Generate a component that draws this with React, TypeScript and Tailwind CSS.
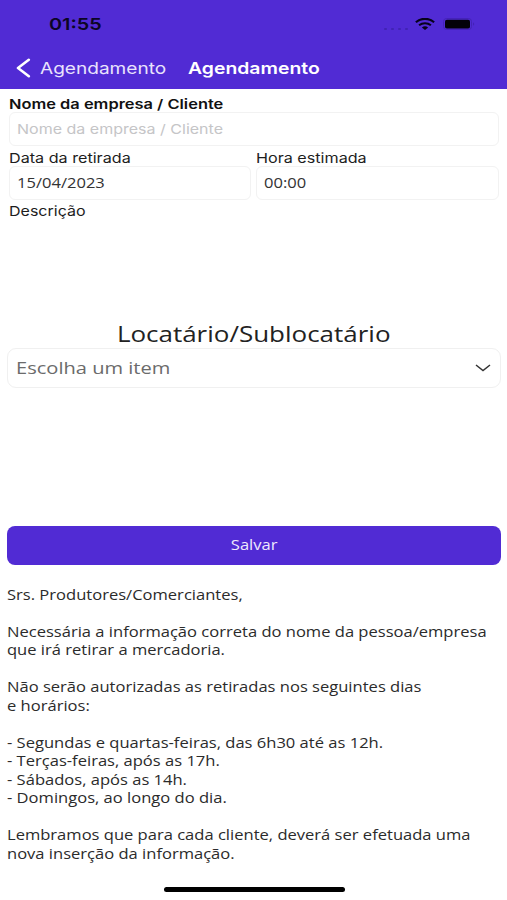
import type { ReactNode } from "react";

const INTER = "font-['Inter','Liberation_Sans',sans-serif]";

function Wide({ children, className = "" }: { children: ReactNode; className?: string }) {
  return (
    <span className={`inline-block whitespace-pre ${className || "origin-left scale-x-[1.217]"}`}>
      {children}
    </span>
  );
}

const notice = [
  "Srs. Produtores/Comerciantes,",
  "",
  "Necessária a informação correta do nome da pessoa/empresa",
  "que irá retirar a mercadoria.",
  "",
  "Não serão autorizadas as retiradas nos seguintes dias",
  "e horários:",
  "",
  "- Segundas e quartas-feiras, das 6h30 até as 12h.",
  "- Terças-feiras, após as 17h.",
  "- Sábados, após as 14h.",
  "- Domingos, ao longo do dia.",
  "",
  "Lembramos que para cada cliente, deverá ser efetuada uma",
  "nova inserção da informação.",
];

function StatusBar() {
  return (
    <div className={`flex h-[48px] items-center justify-between pl-[49px] pr-[32px] ${INTER}`}>
      <div className="text-[16.5px] font-semibold leading-[20px] text-[#0b0524]">
        <Wide className="origin-left scale-x-[1.2]">01:55</Wide>
      </div>
      <div className="flex items-center">
        <div className="mt-[9px] flex gap-[4px]">
          <i className="h-[2px] w-[3px] rounded-full bg-[#4123b4]" />
          <i className="h-[2px] w-[3px] rounded-full bg-[#4123b4]" />
          <i className="h-[2px] w-[3px] rounded-full bg-[#4123b4]" />
          <i className="h-[2px] w-[3px] rounded-full bg-[#4123b4]" />
        </div>
        <svg className="ml-[7px] h-[12px] w-[20px]" viewBox="0 0 20 12" fill="none" stroke="#07021a">
          <path d="M0.9 4.3C6 -0.3 14 -0.3 19.1 4.3" strokeWidth="2.2" />
          <path d="M4.1 7.3C7.4 4.4 12.6 4.4 15.9 7.3" strokeWidth="2" />
          <path d="M6.9 9.4C8.6 7.9 11.4 7.9 13.1 9.4L10 12Z" fill="#07021a" stroke="none" />
        </svg>
        <svg className="ml-[8px] h-[12px] w-[32px]" viewBox="0 0 32 12">
          <rect x="0.5" y="0.5" width="28" height="11" rx="3" fill="none" stroke="#4422b8" />
          <rect x="2" y="1.7" width="25" height="8.8" rx="1.8" fill="#030108" />
          <path d="M30 4.2c1.6.6 1.6 3 0 3.6z" fill="#4422b8" />
        </svg>
      </div>
    </div>
  );
}

export default function App() {
  return (
    <div className="flex h-[900px] w-[507px] flex-col overflow-hidden bg-white font-['Open_Sans','Noto_Sans',sans-serif] text-[13.6px] text-[#2b2b2b]">
      <header className="h-[89.4px] shrink-0 bg-[#512bd4]">
        <StatusBar />
        <div className={`flex h-[40px] items-center pl-[16px] text-[16.5px] leading-[20px] text-white ${INTER}`}>
          <svg className="h-[20px] w-[15px]" viewBox="0 0 15 20" fill="none" stroke="currentColor" strokeWidth="2.6" strokeLinecap="round" strokeLinejoin="round">
            <path d="M12.8 1.8L2 10L12.8 18.2" />
          </svg>
          <div className="ml-[9px] w-[148px] text-[#e9e3fc]">
            <Wide className="origin-left scale-x-[1.155]">Agendamento</Wide>
          </div>
          <div className="font-semibold">
            <Wide className="origin-left scale-x-[1.175]">Agendamento</Wide>
          </div>
        </div>
      </header>

      <main className="flex flex-col">
        <section className={`flex flex-col pl-[9px] pr-[8px] pt-[5.6px] text-[#1d1d1d] ${INTER}`}>
          <div className="h-[17px] font-semibold leading-[18px] text-[#111]">
            <Wide className="origin-left scale-x-[1.208]">Nome da empresa / Cliente</Wide>
          </div>
          <div className="flex h-[34px] items-center rounded-[6px] border border-[#f2f2f2] px-[7.4px] text-[#c5c5c7]">
            <Wide className="origin-left scale-x-[1.178]">Nome da empresa / Cliente</Wide>
          </div>
          <div className="grid grid-cols-[242px_242px] justify-between pt-[3px]">
            <div>
              <div className="h-[17px] leading-[18px]"><Wide className="origin-left scale-x-[1.188]">Data da retirada</Wide></div>
              <div className="flex h-[34px] items-center rounded-[6px] border border-[#f2f2f2] px-[7.4px] font-['Open_Sans','Noto_Sans',sans-serif] text-[#333]">
                <Wide>15/04/2023</Wide>
              </div>
            </div>
            <div className="-ml-px">
              <div className="h-[17px] leading-[18px]"><Wide className="origin-left scale-x-[1.188]">Hora estimada</Wide></div>
              <div className="flex h-[34px] items-center rounded-[6px] border border-[#f2f2f2] px-[7.4px] font-['Open_Sans','Noto_Sans',sans-serif] text-[#333]">
                <Wide>00:00</Wide>
              </div>
            </div>
          </div>
          <div className="mt-[2px] h-[19px] leading-[18px]"><Wide className="origin-left scale-x-[1.178]">Descrição</Wide></div>
        </section>

        <section className="mt-[98px] flex flex-col pl-[7px] pr-[6px]">
          <h2 className="h-[29px] text-center text-[21.4px] leading-[29px] text-[#222]">
            <Wide className="scale-x-[1.214]">Locatário/Sublocatário</Wide>
          </h2>
          <div className="flex h-[40px] items-center justify-between rounded-[9px] border border-[#f0f0f0] pl-[8px] pr-[9px] text-[16.5px] text-[#6b6b6b]">
            <Wide>Escolha um item</Wide>
            <svg className="h-[8px] w-[16px]" viewBox="0 0 16 8" fill="none" stroke="#333" strokeWidth="1.5">
              <path d="M1 1L8 6.6L15 1" />
            </svg>
          </div>
          <button className="mt-[138px] flex h-[39px] items-center justify-center rounded-[8px] bg-[#512bd4] text-[#eee9fd]">
            <Wide className="scale-x-[1.219]">Salvar</Wide>
          </button>
          <div className="mt-[20.6px] leading-[18.5px]">
            {notice.map((line, i) => (
              <div key={i} className="h-[18.5px]">
                <Wide>{line}</Wide>
              </div>
            ))}
          </div>
        </section>
      </main>

      <div className="ml-[164px] mt-[23.6px] h-[5px] w-[181px] shrink-0 rounded-full bg-black" />
    </div>
  );
}
